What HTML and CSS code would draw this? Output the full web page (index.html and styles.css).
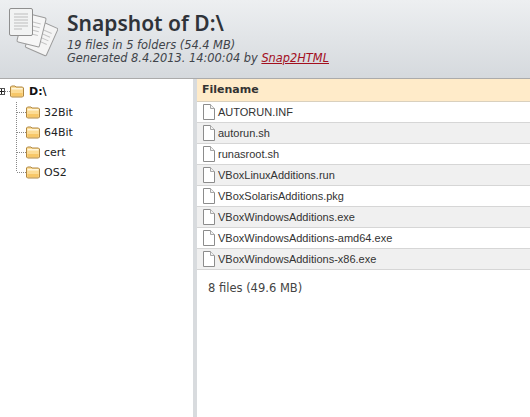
FILE: index.html
```html
<!DOCTYPE html>
<html lang="en">
<head>
    <meta charset="UTF-8">
    <title>Snapshot of D:\</title>
    <link rel="stylesheet" href="styles.css">
</head>
<body>
    <svg width="0" height="0" class="defs">
        <symbol id="folder" viewBox="0 0 14 14">
            <path d="M.5 3 L1.5 2 H5 L6 3 H12.5 L13.5 4 V12 L12.5 13 H1.5 L.5 12 Z" fill="#fcdc96" stroke="#b08742"/>
            <path d="M1.5 4 H12.5 V5.5 H1.5 Z" fill="#fff6dc"/>
            <path d="M1.5 9 H12.5 V12 H1.5 Z" fill="#f7c768"/>
        </symbol>
        <symbol id="file" viewBox="0 0 12 16">
            <path d="M.5 .5 H7.5 L11.5 4.5 V15.5 H.5 Z" fill="#fff" stroke="#8c8c8c"/>
            <path d="M7.5 .5 V4.5 H11.5" fill="#f2f2f2" stroke="#a6a6a6"/>
        </symbol>
    </svg>

    <div class="header">
        <svg class="logo" width="58" height="58" viewBox="0 0 58 58">
            <g transform="rotate(24 42 38)">
                <rect x="30" y="23" width="23" height="30" rx="1.5" fill="#f4f4f4" stroke="#9b9b9b"/>
                <path d="M34 30H49M34 34H49M34 38H49M34 42H49" stroke="#c4c4c4"/>
            </g>
            <g transform="rotate(14 32 30)">
                <rect x="20" y="15" width="23" height="30" rx="1.5" fill="#f6f6f6" stroke="#9b9b9b"/>
                <path d="M24 22H39M24 26H39M24 30H39M24 34H39" stroke="#c4c4c4"/>
            </g>
            <rect x="9.5" y="8.5" width="23" height="27" rx="1.5" fill="#f2f3f3" stroke="#8f8f8f"/>
            <path d="M14 14H28M14 17H28M14 20H28M14 23H28M14 26H28M14 29H22" stroke="#bdbdbd"/>
        </svg>
        <div class="header-text">
            <h1 class="title">Snapshot of D:\</h1>
            <div class="stats">19 files in 5 folders (54.4 MB)</div>
            <div class="stats">Generated 8.4.2013. 14:00:04 by <a href="#" class="link">Snap2HTML</a></div>
        </div>
    </div>

    <div class="main">
        <div class="tree">
            <div class="tree-root">
                <span class="expander"></span>
                <span class="dots-h"></span>
                <svg class="folder-icon" width="14" height="14"><use href="#folder"/></svg>
                <span class="root-name">D:\</span>
            </div>
            <ul class="tree-list">
                <li class="tree-item"><span class="dots-h"></span><svg class="folder-icon" width="14" height="14"><use href="#folder"/></svg><span>32Bit</span></li>
                <li class="tree-item"><span class="dots-h"></span><svg class="folder-icon" width="14" height="14"><use href="#folder"/></svg><span>64Bit</span></li>
                <li class="tree-item"><span class="dots-h"></span><svg class="folder-icon" width="14" height="14"><use href="#folder"/></svg><span>cert</span></li>
                <li class="tree-item"><span class="dots-h"></span><svg class="folder-icon" width="14" height="14"><use href="#folder"/></svg><span>OS2</span></li>
            </ul>
        </div>
        <div class="splitter"></div>
        <div class="files">
            <div class="files-head">Filename</div>
            <div class="file-row"><svg class="file-icon" width="12" height="16"><use href="#file"/></svg>AUTORUN.INF</div>
            <div class="file-row alt"><svg class="file-icon" width="12" height="16"><use href="#file"/></svg>autorun.sh</div>
            <div class="file-row"><svg class="file-icon" width="12" height="16"><use href="#file"/></svg>runasroot.sh</div>
            <div class="file-row alt"><svg class="file-icon" width="12" height="16"><use href="#file"/></svg>VBoxLinuxAdditions.run</div>
            <div class="file-row"><svg class="file-icon" width="12" height="16"><use href="#file"/></svg>VBoxSolarisAdditions.pkg</div>
            <div class="file-row alt"><svg class="file-icon" width="12" height="16"><use href="#file"/></svg>VBoxWindowsAdditions.exe</div>
            <div class="file-row"><svg class="file-icon" width="12" height="16"><use href="#file"/></svg>VBoxWindowsAdditions-amd64.exe</div>
            <div class="file-row alt"><svg class="file-icon" width="12" height="16"><use href="#file"/></svg>VBoxWindowsAdditions-x86.exe</div>
            <div class="files-total">8 files (49.6 MB)</div>
        </div>
    </div>
</body>
</html>
```

FILE: styles.css
```css
html, body {
    height: 100%;
}
body {
    margin: 0;
    font-family: "DejaVu Sans", Verdana, sans-serif;
    font-size: 11px;
    color: #333333;
    background-color: #FFFFFF;
    display: flex;
    flex-direction: column;
    overflow: hidden;
}
.defs {
    position: absolute;
}
.header {
    height: 78px;
    flex-shrink: 0;
    display: flex;
    background: linear-gradient(#EDEFF1, #D5D9DD);
    border-bottom: 1px solid #ABABAB;
}
.logo {
    flex-shrink: 0;
}
.header-text {
    margin-left: 9px;
    padding-top: 8px;
}
.title {
    margin: 0 0 1px;
    font-family: "Noto Sans", sans-serif;
    font-size: 21px;
    font-weight: 600;
    line-height: 30px;
    color: #2F3339;
}
.stats {
    font-size: 11.4px;
    font-style: italic;
    line-height: 13px;
    color: #40444A;
}
.link {
    color: #A30F1E;
}
.main {
    flex: 1;
    display: flex;
    min-height: 0;
}
.tree {
    width: 193px;
    flex-shrink: 0;
    color: #222222;
}
.tree-root {
    height: 20px;
    margin-top: 2px;
    display: flex;
    align-items: center;
    font-weight: bold;
    color: #111111;
}
.expander {
    width: 7px;
    height: 7px;
    margin-left: -2px;
    box-sizing: border-box;
    border: 1px solid #555555;
    background:
        linear-gradient(#222222, #222222) center / 5px 1px no-repeat,
        linear-gradient(#222222, #222222) center / 1px 5px no-repeat,
        #FFFFFF;
}
.dots-h {
    width: 5px;
    border-top: 1px dotted #888888;
}
.root-name {
    margin-left: 5px;
}
.tree-list {
    list-style: none;
    margin: 1px 0 0 16px;
    padding: 0;
}
.tree-item {
    height: 20px;
    display: flex;
    align-items: center;
    background: repeating-linear-gradient(#888888 0 1px, transparent 1px 2px) left top / 1px 100% no-repeat;
}
.tree-item:last-child {
    background-size: 1px 50%;
}
.tree-item .dots-h {
    width: 9px;
    margin-left: 1px;
}
.tree-item .folder-icon {
    margin-right: 4px;
}
.splitter {
    width: 4px;
    flex-shrink: 0;
    background-color: #D8DBDE;
}
.files {
    flex: 1;
    min-width: 0;
    font-family: "Liberation Sans", Arial, sans-serif;
    font-size: 11px;
    color: #333333;
}
.files-head {
    height: 23px;
    line-height: 22px;
    padding-left: 5px;
    font-family: "DejaVu Sans", Verdana, sans-serif;
    font-size: 11px;
    font-weight: bold;
    color: #333333;
    background-color: #FFEBC9;
    border-bottom: 1px solid #D9D0BE;
    box-sizing: border-box;
}
.file-row {
    height: 21px;
    box-sizing: border-box;
    padding-left: 6px;
    display: flex;
    align-items: center;
    border-bottom: 1px solid #D6D6D6;
}
.file-row.alt {
    background-color: #F0F0F0;
}
.file-icon {
    margin-right: 3px;
    flex-shrink: 0;
}
.files-total {
    padding: 12px 0 0 11px;
    font-family: "DejaVu Sans", Verdana, sans-serif;
    font-size: 11.5px;
    line-height: 13px;
    color: #444444;
}
```
